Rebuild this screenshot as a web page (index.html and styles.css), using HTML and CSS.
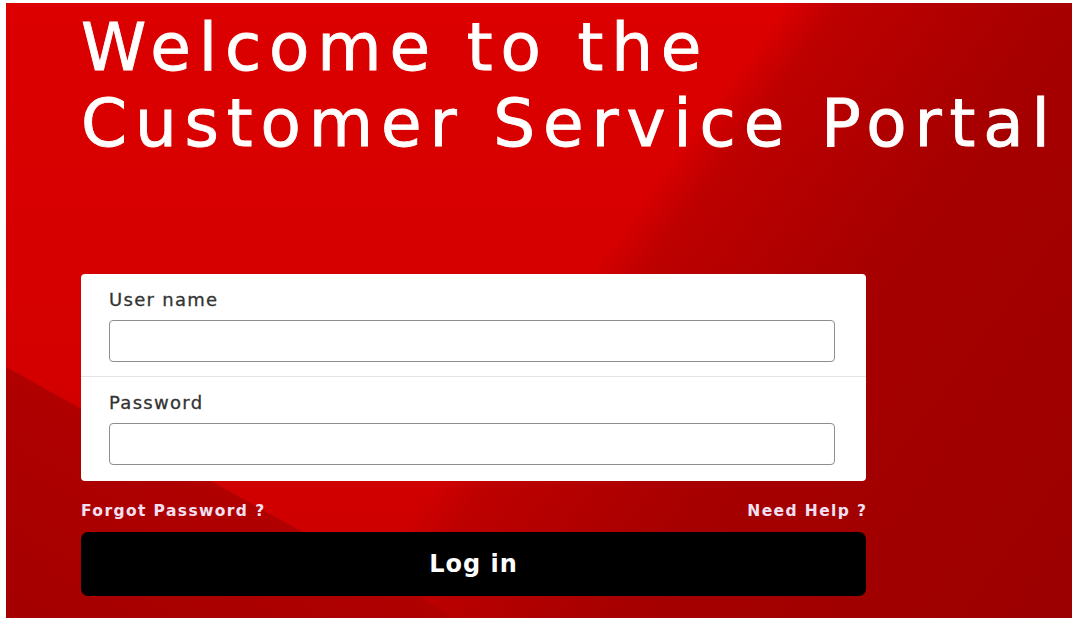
FILE: index.html
```html
<!DOCTYPE html>
<html lang="en">
<head>
<meta charset="utf-8">
<title>Customer Service Portal</title>
<link rel="stylesheet" href="styles.css">
</head>
<body>
  <main class="page">
    <div class="content">
      <h1 class="title">Welcome to the<br>Customer Service Portal</h1>
      <form class="login" action="#" onsubmit="return false;">
        <div class="card">
          <div class="field">
            <label for="username">User name</label>
            <input id="username" name="username" type="text" autocomplete="username">
          </div>
          <div class="field">
            <label for="password">Password</label>
            <input id="password" name="password" type="password" autocomplete="current-password">
          </div>
        </div>
        <div class="links">
          <a href="#" class="link">Forgot Password ?</a>
          <a href="#" class="link link-right">Need Help ?</a>
        </div>
        <button type="submit" class="btn">Log in</button>
      </form>
    </div>
  </main>
</body>
</html>
```

FILE: styles.css
```css
html,
body {
  margin: 0;
  background: #ffffff;
}

body {
  padding: 3px 0 1px 6px;
  height: 619px;
  box-sizing: border-box;
  overflow: hidden;
}

/* red backdrop with two darker diagonal panels */
.page {
  height: 615px;
  box-sizing: border-box;
  padding-left: 75px;
  overflow: hidden;
  background:
    linear-gradient(209.1deg, rgba(176, 0, 0, 0) 836px, #b00000 837px, #a40000 1056px),
    linear-gradient(126.16deg, rgba(190, 0, 0, 0) 630px, #bd0000 675px, #a60000 860px, #9c0000 1224px),
    linear-gradient(180deg, #dc0000 0%, #d40000 60%, #cc0000 100%);
}

.content {
  width: 785px;
}

.title {
  margin: 7px 0 0;
  font-family: "DejaVu Sans", "Liberation Sans", sans-serif;
  font-size: 66px;
  line-height: 76px;
  font-weight: normal;
  letter-spacing: 7.85px;
  color: #ffffff;
  -webkit-text-stroke: 0.9px #ffffff;
  white-space: nowrap;
}

.login {
  margin-top: 112px;
  display: flex;
  flex-direction: column;
}

.card {
  background: #ffffff;
  border-radius: 4px;
}

.field {
  display: flex;
  flex-direction: column;
  gap: 10px;
  padding: 16px 31px 14px 28px;
}

.field + .field {
  border-top: 1px solid #e4e4e4;
  padding-bottom: 16px;
}

.field label {
  font-family: "DejaVu Sans", "Liberation Sans", sans-serif;
  font-size: 18px;
  line-height: 20px;
  letter-spacing: 1.3px;
  color: #333333;
  -webkit-text-stroke: 0.3px #333333;
}

.field input {
  height: 42px;
  width: 100%;
  box-sizing: border-box;
  margin: 0;
  border: 1.5px solid #8e8e8e;
  border-radius: 4px;
  background: #ffffff;
  font-family: "DejaVu Sans", sans-serif;
  font-size: 16px;
}

.links {
  display: flex;
  justify-content: space-between;
  margin-top: 21px;
}

.link {
  font-family: "DejaVu Sans", "Liberation Sans", sans-serif;
  font-weight: bold;
  font-size: 15.5px;
  line-height: 18px;
  letter-spacing: 1.4px;
  color: #f2e0f2;
  text-decoration: none;
}

.link-right {
  margin-right: -1.5px;
}

.btn {
  margin-top: 12px;
  height: 64px;
  width: 100%;
  border: none;
  border-radius: 7px;
  background: #000000;
  color: #ffffff;
  font-family: "DejaVu Sans", "Liberation Sans", sans-serif;
  font-weight: bold;
  font-size: 24px;
  letter-spacing: 1px;
  cursor: pointer;
}
```
